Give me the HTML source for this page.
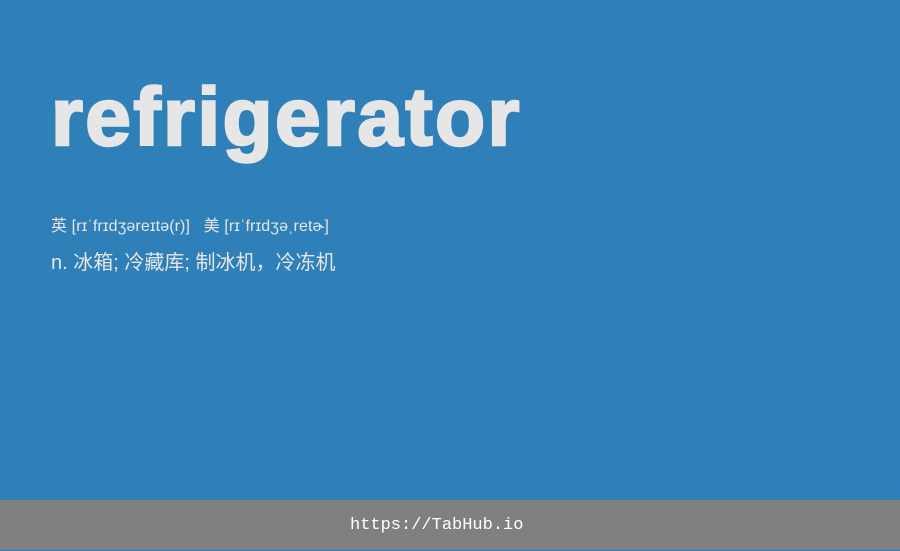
<!DOCTYPE html>
<html><head><meta charset="utf-8"><style>
body{margin:0;width:900px;height:550px;background:#2f80b8;position:relative;overflow:hidden;font-family:"Liberation Sans","Noto Sans CJK SC",sans-serif;color:#e6e6e6}
h1{position:absolute;left:51px;top:68px;margin:0;font-size:82px;font-weight:bold;line-height:100px;color:#e6e6e6;letter-spacing:2.4px;-webkit-text-stroke:2.5px #e6e6e6}
.p{position:absolute;left:51px;top:212px;font-size:16px;white-space:pre;letter-spacing:0.1px}
.d{position:absolute;left:51px;top:246px;font-size:20px}
.f{position:absolute;left:0;top:500px;width:900px;height:50px;background:#808080;color:#fff;font-family:"Liberation Mono",monospace;font-size:17px;line-height:50px}
.f span{position:absolute;left:350px;top:1px}
</style></head><body>
<h1>refrigerator</h1>
<div class="p">英 [rɪˈfrɪdʒəreɪtə(r)]   美 [rɪˈfrɪdʒəˌretɚ]</div>
<div class="d">n. 冰箱; 冷藏库; 制冰机，冷冻机</div>
<div class="f"><span>https://TabHub.io</span></div>
</body></html>
